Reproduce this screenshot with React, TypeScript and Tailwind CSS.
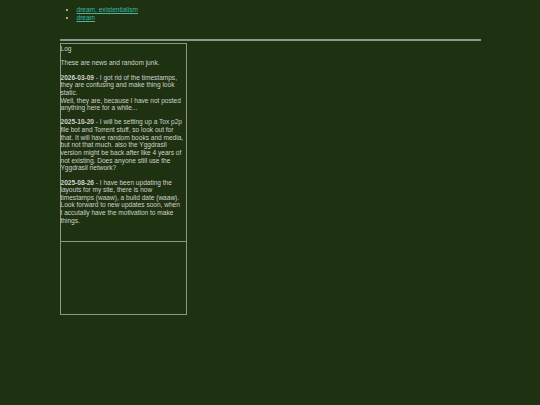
import React from 'react';

export default function App() {
  return (
    <div
      className="min-h-screen w-full bg-[#1e3111] text-[#d0d2cd]"
      style={{ fontFamily: '"Liberation Sans", Arial, sans-serif' }}
    >
      <div className="mx-auto w-[421px] text-[6.55px] leading-[7.65px]">
        <ul className="list-disc pl-[17px] pt-[6px]">
          <li>
            <a href="#" className="text-[#3fb7a3] underline">dream, existentialism</a>
          </li>
          <li>
            <a href="#" className="text-[#3fb7a3] underline">dream</a>
          </li>
        </ul>

        <div className="mt-[18px] h-[2px] bg-[#8d9889]" />

        <div className="mt-[2px] w-[127px] border-[1.5px] border-[#8d9889]">
          <div className="h-[197px] pt-[1px]">
            <p>Log</p>
            <p className="mt-[6.5px]">These are news and random junk.</p>
            <p className="mt-[6.5px]">
              <b>2026-03-09</b> - I got rid of the timestamps, they are confusing and make thing look static.
              <br />
              Well, they are, because I have not posted anything here for a while...
            </p>
            <p className="mt-[6.5px]">
              <b>2025-10-20</b> - I will be setting up a Tox p2p file bot and Torrent stuff, so look out for that. It will have random books and media, but not that much. also the Yggdrasil version might be back after like 4 years of not existing. Does anyone still use the Yggdrasil network?
            </p>
            <p className="mt-[6.5px]">
              <b>2025-08-26</b> - I have been updating the layouts for my site, there is now timestamps (waaw), a build date (waaw). Look forward to new updates soon, when
              <br />
              I accutally have the motivation to make things.
            </p>
          </div>
          <div className="h-[73px] border-t-[1.5px] border-[#8d9889]" />
        </div>
      </div>
    </div>
  );
}
